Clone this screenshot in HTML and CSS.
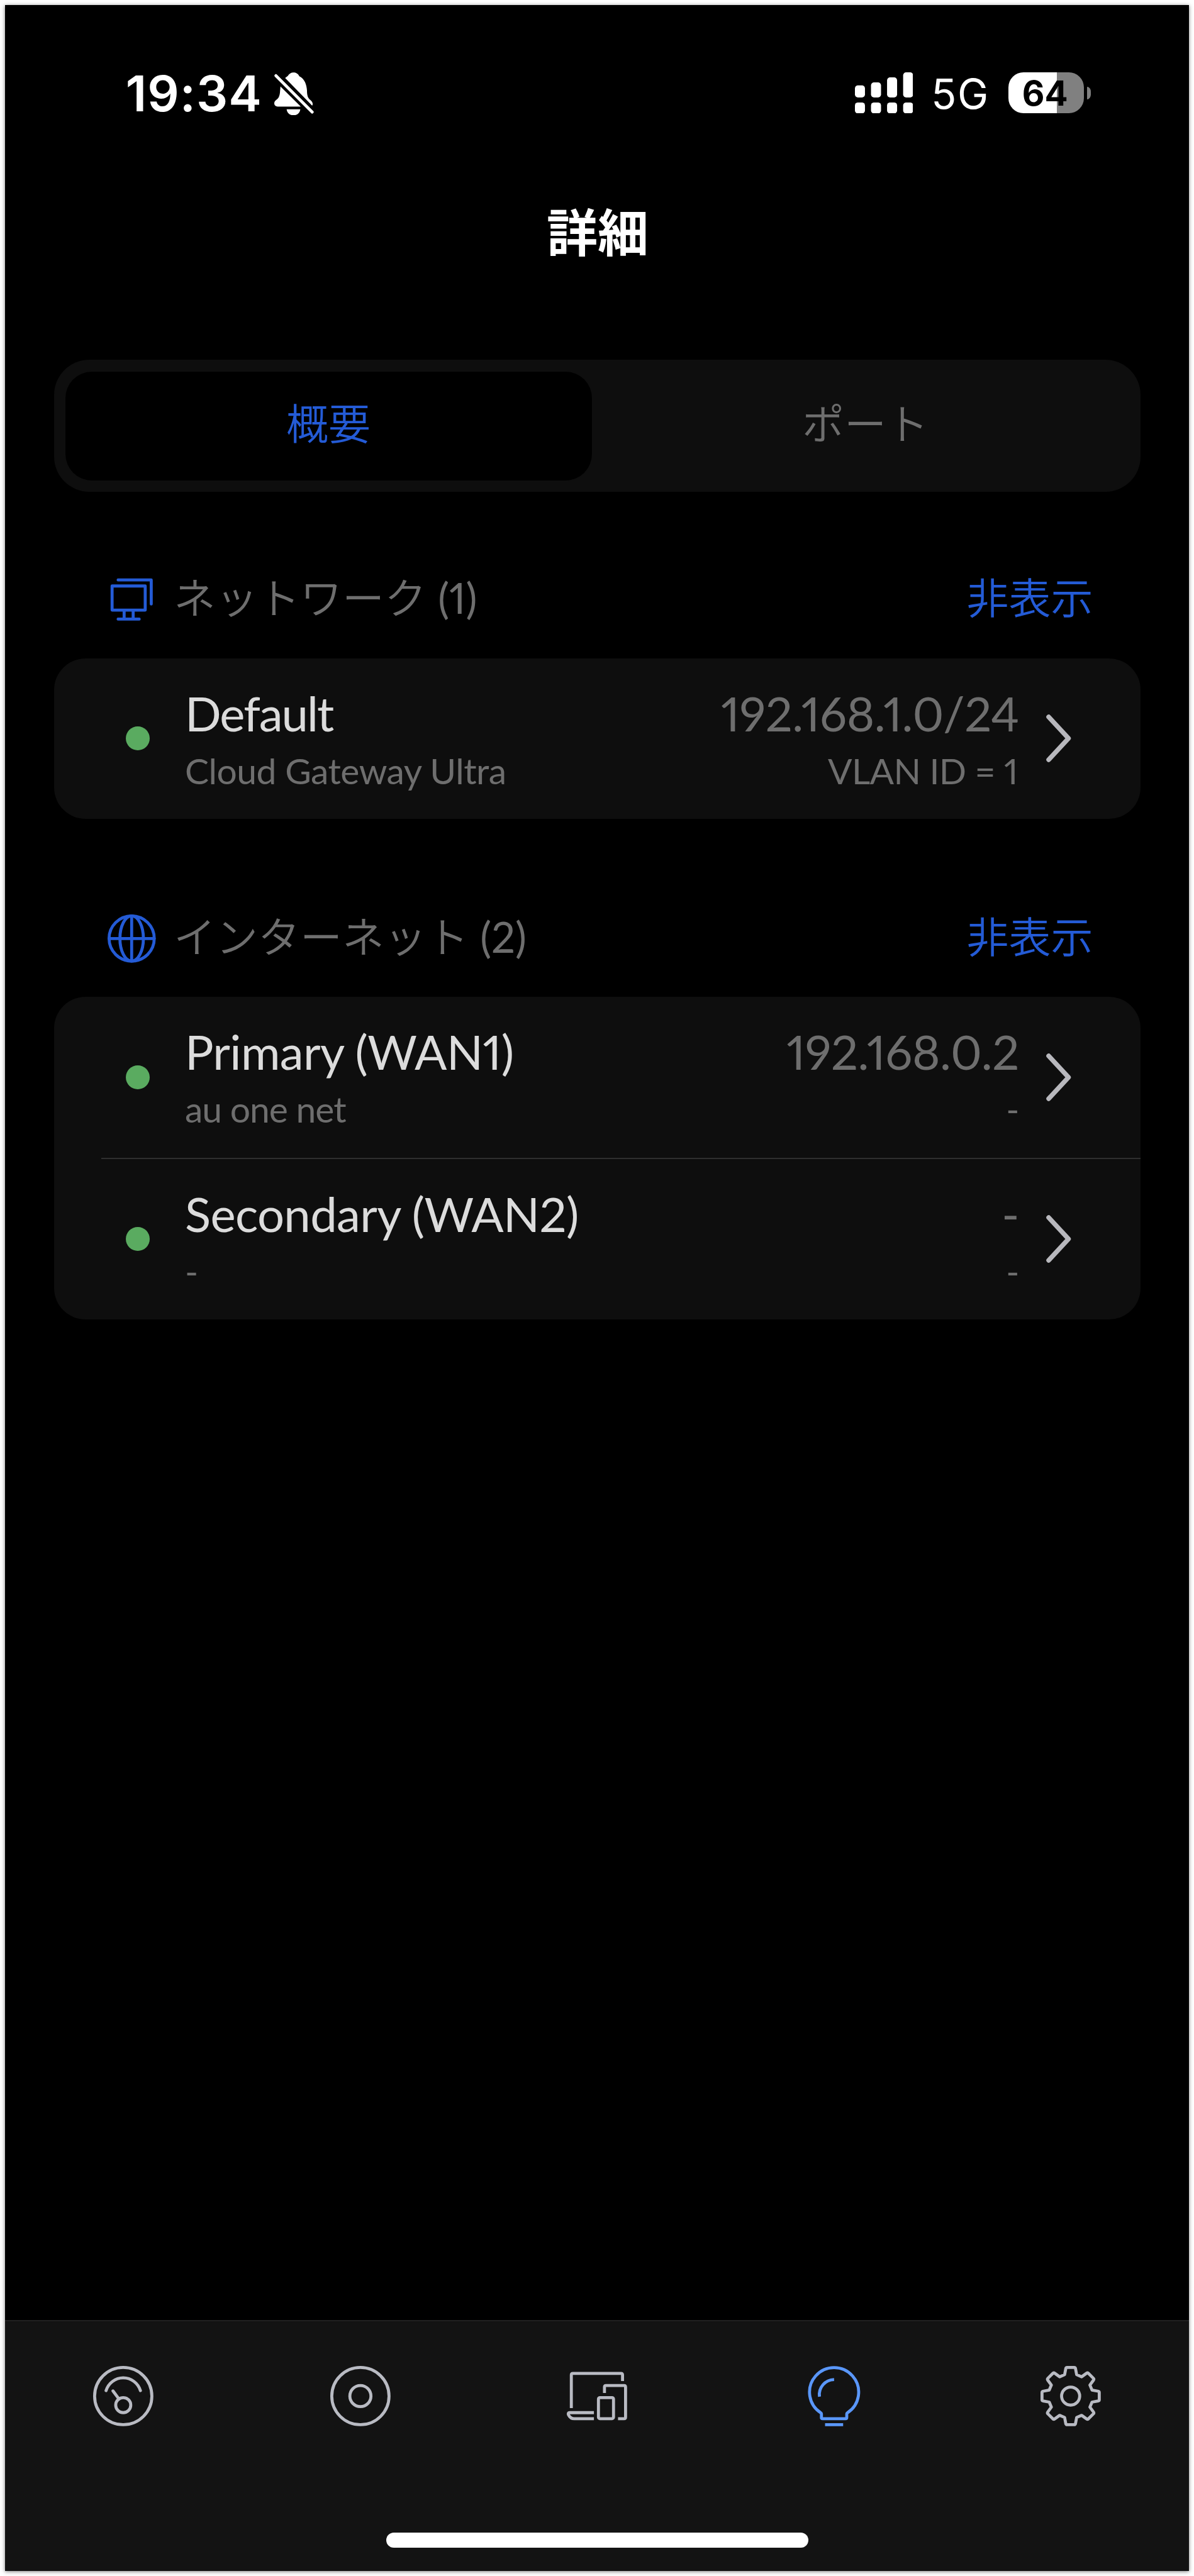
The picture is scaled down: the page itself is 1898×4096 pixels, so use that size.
FILE: index.html
```html
<!DOCTYPE html>
<html lang="ja">
<head>
<meta charset="utf-8">
<title>詳細</title>
<link rel="stylesheet" href="styles.css">
</head>
<body>
<div class="phone">
  <header class="status">
    <span class="time">19:34</span>
    <svg class="bell" viewBox="947 72 236 258" fill="#fff">
      <path d="M1012 106L1028 94C1042 65 1083 65 1097 95C1130 110 1141 148 1143 180C1143 215 1150 226 1162 237C1174 248 1182 258 1174 272Z"/>
      <path d="M984 157L1106 277H967C945 277 940 252 957 239C974 226 980 215 982 180Z"/>
      <path d="M1021 293H1103C1097 342 1027 342 1021 293Z"/>
      <path d="M957 92L1174 310" fill="none" stroke="#fff" stroke-width="18" stroke-linecap="round"/>
    </svg>
    <span class="spacer"></span>
    <svg class="signal" viewBox="0 0 116 82" fill="#fff">
      <rect x="0" y="26" width="20" height="24" rx="6"/><rect x="32" y="20" width="20" height="30" rx="6"/><rect x="64" y="10" width="20" height="40" rx="6"/><rect x="96" y="0" width="20" height="50" rx="6"/>
      <rect x="0" y="60" width="20" height="22" rx="6"/><rect x="32" y="60" width="20" height="22" rx="6"/><rect x="64" y="60" width="20" height="22" rx="6"/><rect x="96" y="60" width="20" height="22" rx="6"/>
    </svg>
    <span class="carrier">5G</span>
    <span class="battery">64</span>
    <span class="nub"></span>
  </header>
  <h1 class="title">詳細</h1>
  <nav class="segment">
    <span class="seg active">概要</span>
    <span class="seg ports">ポート</span>
  </nav>

  <section class="group">
    <div class="group-head">
      <svg class="group-icon" viewBox="-1 -1 16 16">
        <path d="M.5 2.5h11v8H.5zM4.5 10.5v3M7.5 10.5v3M2.5 13.5h7M2.5.5h11v8"/>
      </svg>
      <h2>ネットワーク <span class="count">(1)</span></h2>
      <a class="hide">非表示</a>
    </div>
    <div class="card">
      <div class="row">
        <i class="dot"></i>
        <div class="cell"><p class="main name">Default</p><p class="sub">Cloud Gateway Ultra</p></div>
        <div class="cell end"><p class="main dim">192.168.1.0/24</p><p class="sub vlan">VLAN ID = 1</p></div>
        <svg class="chevron" viewBox="0 0 42 78"><path d="M5 5L36.500 39L5 73"/></svg>
      </div>
    </div>
  </section>

  <section class="group">
    <div class="group-head">
      <svg class="group-icon" viewBox="0 0 16 16">
        <circle cx="8" cy="8" r="7.500"/><ellipse cx="8" cy="8" rx="3.900" ry="7.500"/><path d="M8 .5v15M.5 8h15"/>
      </svg>
      <h2>インターネット <span class="count">(2)</span></h2>
      <a class="hide">非表示</a>
    </div>
    <div class="card">
      <div class="row">
        <i class="dot"></i>
        <div class="cell"><p class="main">Primary (WAN1)</p><p class="sub isp">au one net</p></div>
        <div class="cell end"><p class="main dim">192.168.0.2</p><p class="sub">-</p></div>
        <svg class="chevron" viewBox="0 0 42 78"><path d="M5 5L36.500 39L5 73"/></svg>
      </div>
      <hr class="divider">
      <div class="row">
        <i class="dot"></i>
        <div class="cell"><p class="main">Secondary (WAN2)</p><p class="sub">-</p></div>
        <div class="cell end"><p class="main dim">-</p><p class="sub">-</p></div>
        <svg class="chevron" viewBox="0 0 42 78"><path d="M5 5L36.500 39L5 73"/></svg>
      </div>
    </div>
  </section>

  <footer class="tabbar">
    <div class="tabs">
      <span class="tab"><svg viewBox="0 0 20 20"><circle cx="10" cy="10" r="9.500"/><path d="M4.300 8.200A5.950 5.950 0 0 1 15.700 8.200M6.600 8.300L8.600 11" stroke-linecap="round"/><circle cx="10" cy="13" r="2.500"/></svg></span>
      <span class="tab"><svg viewBox="0 0 20 20"><circle cx="10" cy="10" r="9.500"/><circle cx="10" cy="10" r="3.500"/></svg></span>
      <span class="tab"><svg viewBox="0 0 20 20"><path d="M1.500 14V3Q1.500 2.500 2 2.500H18Q18.500 2.500 18.500 3V5M9 15.500H1C.4 15.500 .4 16 .6 16.300Q1.200 17.500 2.500 17.500H9M12.500 9V7Q12.500 6.500 13 6.500H19Q19.500 6.500 19.500 7V17Q19.500 17.500 19 17.500H17"/><rect x="10.500" y="10.500" width="5" height="7" rx=".5"/></svg></span>
      <span class="tab on"><svg viewBox="0 0 20 20"><path d="M5.800 17.500V15.900Q5.800 15.700 5.500 15.500A8.150 8.150 0 1 1 14.500 15.500Q14.200 15.700 14.200 15.900V17.100Q14.200 17.500 13.800 17.500H6.200Q5.800 17.500 5.800 17.100"/><path d="M10 4.500A5 5 0 0 0 5.150 10.200"/><path d="M7 19.500H13"/></svg></span>
      <span class="tab"><svg viewBox="-10 -10 20 20"><path d="M-1.200-9.500H1.200Q1.500-9.500 1.600-9.200L2-7.100L3.650-6.400L5.300-7.600Q5.600-7.800 5.850-7.600L7.600-5.850Q7.800-5.600 7.600-5.300L6.400-3.650L7.100-2L9.200-1.600Q9.500-1.500 9.500-1.200V1.200Q9.500 1.500 9.200 1.600L7.100 2L6.400 3.650L7.600 5.300Q7.800 5.600 7.600 5.850L5.850 7.600Q5.600 7.800 5.300 7.600L3.650 6.400L2 7.100L1.600 9.200Q1.500 9.500 1.200 9.500H-1.200Q-1.500 9.500-1.600 9.200L-2 7.100L-3.650 6.400L-5.300 7.600Q-5.600 7.800-5.850 7.600L-7.600 5.850Q-7.800 5.600-7.600 5.300L-6.400 3.650L-7.100 2L-9.200 1.600Q-9.500 1.500-9.500 1.200V-1.200Q-9.500-1.500-9.200-1.600L-7.100-2L-6.400-3.650L-7.600-5.300Q-7.800-5.600-7.600-5.850L-5.850-7.600Q-5.600-7.800-5.300-7.600L-3.650-6.400L-2-7.100L-1.600-9.200Q-1.500-9.500-1.200-9.500Z"/><circle r="3"/></svg></span>
    </div>
    <div class="home"></div>
  </footer>
</div>
</body>
</html>
```
FILE: styles.css
```css
* { box-sizing: border-box; margin: 0; padding: 0; }
body {
  width: 1898px;
  height: 4096px;
  padding: 8px;
  background: #fff;
  overflow: hidden;
  font-family: Lato, "Noto Sans CJK JP", sans-serif;
  font-variant-numeric: proportional-nums;
}
.phone {
  display: flex;
  flex-direction: column;
  width: 1882px;
  height: 4080px;
  background: #000;
  box-shadow: 0 1px 6px rgba(0, 0, 0, .5);
}

.status {
  display: flex;
  align-items: center;
  height: 131px;
  margin-top: 74px;
  padding: 0 156px 0 191.700px;
  color: #fff;
  font-family: Inter, sans-serif;
}
.time { width: 236.300px; font-size: 79px; font-weight: 600; line-height: 96px; letter-spacing: 1.070px; white-space: nowrap; }
.bell { width: 62.600px; height: 68.500px; margin-top: 3px; }
.spacer { flex: 1; }
.signal { width: 92.600px; height: 65.500px; }
.carrier { width: 91px; margin: 2px 0 0 29px; font-size: 66px; line-height: 80px; letter-spacing: 1.500px; white-space: nowrap; }
.battery {
  width: 119.700px;
  height: 65.500px;
  margin-left: 32px;
  padding-right: 4px;
  border-radius: 24px;
  background: linear-gradient(90deg, #fff 64%, #808080 64%);
  color: #000;
  font-size: 55px;
  font-weight: 700;
  line-height: 66px;
  text-align: center;
}
.nub { width: 6.500px; height: 20px; margin-left: 4.500px; border-radius: 0 8px 8px 0 / 0 10px 10px 0; background: #808080; }

.title { margin-top: 96px; padding-left: 2px; color: #fff; font-size: 81px; font-weight: 700; line-height: 120px; text-align: center; }

.segment {
  display: grid;
  grid-template-columns: 837px 1fr;
  height: 210px;
  margin: 143px 77px 0 78px;
  padding: 18.500px 17.500px;
  border-radius: 56px;
  background: #0e0e0e;
}
.seg { border-radius: 42px; color: #6e6e6e; font-size: 67px; font-weight: 350; line-height: 165px; text-align: center; }
.active { background: #000; color: #245bd6; }
.ports { padding-left: 15px; }

.group { margin: 0 77px 0 78px; }
.segment + .group { padding-top: 121px; }
.group + .group { padding-top: 140px; }
.group-head { display: flex; align-items: center; height: 100px; margin-bottom: 43.500px; padding: 0 75.500px 0 85px; }
.group-icon { width: 76.600px; height: 76.600px; fill: none; stroke: #245bd6; stroke-width: 1; stroke-linecap: round; stroke-linejoin: round; overflow: visible; }
.group-head h2,
.hide { padding-bottom: 6px; font-size: 67px; font-weight: 350; line-height: 94px; white-space: nowrap; }
.group-head h2 { flex: 1; margin-left: 28.400px; color: #6e6e6e; }
.count { font-weight: 400; }
.hide { color: #245bd6; }

.card { border-radius: 50px; background: #0e0e0e; }
.row { display: flex; align-items: center; height: 255.300px; padding: 0 109px 0 114px; }
.dot { width: 38px; height: 38px; border-radius: 50%; background: #5aab60; }
.cell { display: flex; flex-direction: column; margin-left: 56px; padding-top: 9px; white-space: nowrap; }
.end { flex: 1; align-items: flex-end; margin: 0 42px 0 0; }
.main { color: #dcdcdc; font-size: 76px; line-height: 92px; letter-spacing: -.62px; }
.name { letter-spacing: -1.900px; }
.sub, .dim { color: #6e6e6e; }
.dim { letter-spacing: -.42px; }
.sub { font-size: 57px; line-height: 90px; letter-spacing: -.5px; }
.isp { letter-spacing: -1px; }
.vlan { padding-right: 2px; letter-spacing: -.6px; }
.chevron { width: 42px; height: 78px; fill: none; stroke: #b8b8bd; stroke-width: 7.500; stroke-linecap: round; stroke-linejoin: round; }
.divider { height: 2px; margin-left: 75px; border: 0; background: #2e2e2e; }

.tabbar { height: 399px; margin-top: auto; border-top: 2px solid #212121; background: #131313; }
.tabs { display: flex; padding-top: 71px; }
.tab { flex: 1; display: flex; justify-content: center; }
.tab svg { width: 95.800px; height: 95.800px; fill: none; stroke: #b9bbc3; stroke-width: 1; stroke-linejoin: round; overflow: visible; }
.tab.on svg { stroke: #5a97fa; }
.home { width: 671px; height: 24px; margin: 169px auto 0; border-radius: 12px; background: #fff; }
```
